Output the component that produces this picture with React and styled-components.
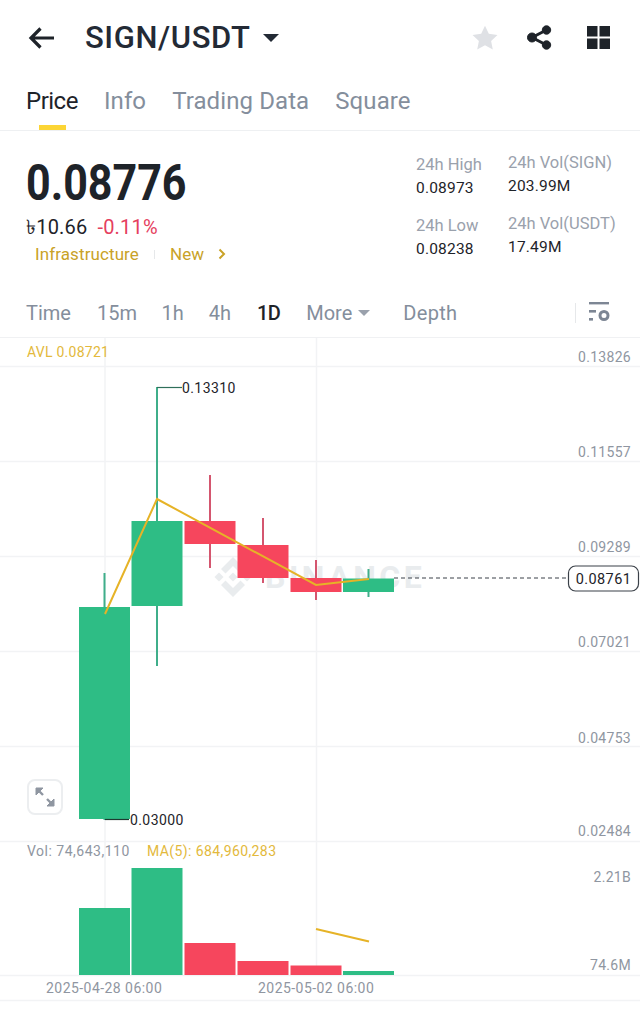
import React from "react";
import styled, { createGlobalStyle } from "styled-components";

const GlobalStyle = createGlobalStyle`
  html, body {
    margin: 0;
    padding: 0;
    background: #fff;
    font-family: Roboto, "Noto Sans", "DejaVu Sans", sans-serif;
  }
`;

const Page = styled.div`
  width: 640px;
  height: 1014px;
  overflow: hidden;
  background: #fff;
  color: #1e2329;
`;

const Header = styled.header`
  height: 75px;
  display: flex;
  align-items: center;
  padding: 0 30px 0 28px;
  box-sizing: border-box;
`;

const Symbol = styled.h1`
  margin: 0 0 0 30px;
  font-size: 31px;
  font-weight: 500;
  letter-spacing: 0.6px;
  color: #232a35;
`;

const Caret = styled.span`
  width: 0;
  height: 0;
  margin-left: ${(props) => props.gap}px;
  border-left: ${(props) => props.size}px solid transparent;
  border-right: ${(props) => props.size}px solid transparent;
  border-top: ${(props) => props.size}px solid ${(props) => props.color};
`;

const HeaderActions = styled.div`
  margin-left: auto;
  display: flex;
  align-items: center;
  gap: 29px;
`;

const GridIcon = styled.svg`
  margin-left: 6px;
`;

const Tabs = styled.nav`
  height: 55px;
  display: flex;
  gap: 26px;
  padding: 0 26px;
  border-bottom: 1px solid #eef0f2;
`;

const Tab = styled.div`
  position: relative;
  font-size: 24px;
  line-height: 52px;
  letter-spacing: ${(props) => (props.active ? "-0.5px" : "0.1px")};
  color: ${(props) => (props.active ? "#1e2329" : "#848e9c")};

  ${(props) =>
    props.active &&
    `&::after {
      content: "";
      position: absolute;
      left: 13px;
      right: 12px;
      bottom: 0;
      height: 5px;
      background: #fcd535;
    }`}
`;

const Summary = styled.section`
  height: 157px;
  display: flex;
  justify-content: space-between;
  padding: 0 0 0 26px;
`;

const PriceBlock = styled.div`
  padding-top: 23px;
`;

const LastPrice = styled.div`
  font-size: 50px;
  line-height: 58px;
  font-weight: 700;
  color: #1e2329;
  transform: scaleX(0.86);
  transform-origin: left center;
`;

const FiatRow = styled.div`
  margin-top: 3px;
  display: flex;
  gap: 10px;
  font-size: 20px;
  line-height: 24px;
  letter-spacing: 0.2px;
`;

const Change = styled.span`
  color: #e5405e;
`;

const TagRow = styled.div`
  margin: 2px 0 0 9px;
  display: flex;
  align-items: center;
  font-size: 17px;
  letter-spacing: 0.1px;
  line-height: 26px;
  color: #c9a227;
`;

const TagDivider = styled.span`
  width: 1px;
  height: 9px;
  margin: 0 15px;
  background: #e6e8ea;
`;

const TagChevron = styled.svg`
  margin-left: 14px;
`;

const Stats = styled.div`
  width: 224px;
  display: grid;
  grid-template-columns: 92px 132px;
  padding-top: 22px;
  align-content: start;
`;

const StatColumn = styled.div`
  margin-top: ${(props) => props.lift || 0}px;
  display: flex;
  flex-direction: column;
  gap: 16px;
`;

const Stat = styled.div`
  display: flex;
  flex-direction: column;
  gap: 2px;
`;

const StatLabel = styled.span`
  font-size: 16.5px;
  line-height: 23px;
  color: #9aa1ac;
  white-space: nowrap;
`;

const StatValue = styled.span`
  font-size: 15.5px;
  line-height: 20px;
  letter-spacing: 0.2px;
  color: #1e2329;
`;

const Intervals = styled.div`
  height: 50px;
  display: flex;
  align-items: center;
  padding: 0 30px 0 26px;
  box-sizing: border-box;
  border-bottom: 1px solid #f0f1f3;
`;

const Interval = styled.span`
  margin-right: ${(props) => props.gap || 0}px;
  margin-left: ${(props) => props.lead || 0}px;
  font-size: 20px;
  letter-spacing: ${(props) => props.spread || 0}px;
  font-weight: ${(props) => (props.active ? 500 : 400)};
  color: ${(props) => (props.active ? "#1e2329" : "#848e9c")};
`;

const ToolDivider = styled.span`
  width: 1px;
  height: 20px;
  margin-left: auto;
  margin-right: 13px;
  background: #e6e8ea;
`;

const ChartFrame = styled.div`
  position: relative;
  width: 640px;
  height: 676px;
`;

const ChartSvg = styled.svg`
  display: block;
  font-family: Roboto, "Noto Sans", sans-serif;
`;

const ExpandButton = styled.div`
  position: absolute;
  left: 27px;
  top: 441px;
  width: 36px;
  height: 36px;
  box-sizing: border-box;
  border: 2px solid #eceef0;
  border-radius: 8px;
  background: #fff;
  display: flex;
  align-items: center;
  justify-content: center;
`;

const GREEN = "#2ebd85";
const GREEN_WICK = "#3fae8a";
const RED = "#f6465d";
const RED_WICK = "#d4566f";
const GRID = "#f2f3f5";
const AXIS = "#8f96a1";
const GOLD = "#e3b93c";

const hLines = [366, 461, 556, 651, 746, 841, 975, 1000];
const vLines = [104.5, 316];

const axisLabels = [
  ["0.13826", 357],
  ["0.11557", 452],
  ["0.09289", 547],
  ["0.07021", 642],
  ["0.04753", 738],
  ["0.02484", 831],
  ["2.21B", 877],
  ["74.6M", 965],
];

const candles = [
  { x: 79, w: 51, top: 607, bottom: 819, high: 573, low: 820, color: GREEN, wick: GREEN_WICK, volTop: 908 },
  { x: 131.5, w: 51, top: 521, bottom: 606, high: 387, low: 666, color: GREEN, wick: GREEN_WICK, volTop: 868 },
  { x: 184.5, w: 51, top: 521, bottom: 544, high: 475, low: 568, color: RED, wick: RED_WICK, volTop: 943 },
  { x: 237.5, w: 51, top: 545, bottom: 578, high: 518, low: 583, color: RED, wick: RED_WICK, volTop: 961 },
  { x: 290.5, w: 51, top: 578, bottom: 592, high: 560, low: 600, color: RED, wick: RED_WICK, volTop: 965.5 },
  { x: 343, w: 51, top: 578.5, bottom: 592, high: 569, low: 597, color: GREEN, wick: GREEN_WICK, volTop: 971 },
];

const Candle = ({ x, w, top, bottom, high, low, color, wick, volTop }) => (
  <g fill={color}>
    <rect x={x + w / 2 - 1} y={high} width="2" height={low - high} fill={wick} />
    <rect x={x} y={top} width={w} height={bottom - top} />
    <rect x={x} y={volTop} width={w} height={975 - volTop} />
  </g>
);

const Chart = () => (
  <ChartSvg width="640" height="676" viewBox="0 338 640 676">
    {hLines.map((y) => (
      <line key={y} x1="0" x2="640" y1={y + 0.5} y2={y + 0.5} stroke={GRID} strokeWidth="1.5" />
    ))}
    {vLines.map((x) => (
      <line key={x} x1={x + 0.5} x2={x + 0.5} y1="338" y2="975" stroke={GRID} strokeWidth="1.5" />
    ))}

    {/* watermark */}
    <g fill="#e9ecee">
      <path d="M233 557l12 12-4.5 4.5-7.5-7.5-7.5 7.5-4.5-4.5z" />
      <path d="M233 597l12-12-4.5-4.5-7.5 7.5-7.5-7.5-4.5 4.5z" />
      <path d="M233 572.5l4.5 4.5-4.5 4.5-4.5-4.5zM219 572.5l4.5 4.5-4.5 4.5-4.5-4.5zM247 572.5l4.5 4.5-4.5 4.5-4.5-4.5z" />
      <text x="265" y="588" fontSize="32" fontWeight="700" letterSpacing="3.5">BINANCE</text>
    </g>

    {candles.map((c) => (
      <Candle key={c.x} {...c} />
    ))}

    <polyline points="105,614 157,499 316,585 369,579" fill="none" stroke="#e6b327" strokeWidth="2" />
    <line x1="316" y1="929" x2="369" y2="941.5" stroke="#e6b327" strokeWidth="2" />

    <path d="M157 387.5H182" stroke="#2f6f5a" strokeWidth="1.2" fill="none" />
    <text x="182" y="393" fontSize="14" letterSpacing="0.4" fill="#1e2329">0.13310</text>
    <path d="M105 819.5H129" stroke="#1e3a30" strokeWidth="1.2" fill="none" />
    <text x="130" y="825" fontSize="14" letterSpacing="0.4" fill="#1e2329">0.03000</text>

    <line x1="394" x2="567" y1="578" y2="578" stroke="#3a4048" strokeWidth="1" strokeDasharray="4 3" />
    <rect x="568.5" y="566" width="70" height="25" rx="7" fill="#fff" stroke="#3a4048" strokeWidth="1.2" />
    <text x="603.5" y="584" fontSize="14.5" letterSpacing="0.4" textAnchor="middle" fill="#1e2329">0.08761</text>

    {axisLabels.map(([label, y]) => (
      <text key={label} x="631" y={y + 5} fontSize="14" letterSpacing="0.3" textAnchor="end" fill={AXIS}>
        {label}
      </text>
    ))}

    <text x="27" y="357" fontSize="14" letterSpacing="0.25" fill={GOLD}>AVL 0.08721</text>
    <text x="27" y="856" fontSize="14" letterSpacing="0.5" fill={AXIS}>Vol: 74,643,110</text>
    <text x="147" y="856" fontSize="14" letterSpacing="0.4" fill={GOLD}>MA(5): 684,960,283</text>
    <text x="46" y="993" fontSize="14" letterSpacing="0.45" fill={AXIS}>2025-04-28 06:00</text>
    <text x="258" y="993" fontSize="14" letterSpacing="0.45" fill={AXIS}>2025-05-02 06:00</text>
  </ChartSvg>
);

const stats = [
  {
    lift: 0,
    items: [
      ["24h High", "0.08973"],
      ["24h Low", "0.08238"],
    ],
  },
  {
    lift: -2,
    items: [
      ["24h Vol(SIGN)", "203.99M"],
      ["24h Vol(USDT)", "17.49M"],
    ],
  },
];

const intervals = [
  ["Time", 26],
  ["15m", 24.5],
  ["1h", 25],
  ["4h", 26],
  ["1D", 26],
];

const App = () => (
  <Page>
    <GlobalStyle />
    <Header>
      <svg width="27" height="24" viewBox="0 0 27 24" fill="none" stroke="#1e2329" strokeWidth="3.2">
        <path d="M26 12H3M12.5 2.5L3 12l9.5 9.5" />
      </svg>
      <Symbol>SIGN/USDT</Symbol>
      <Caret size={8} gap={12} color="#232a35" />
      <HeaderActions>
        <svg width="26" height="26" viewBox="0 0 26 26" fill="#dfe1e5">
          <path d="M13 .8l3.8 8 8.7 1.1-6.4 6 1.7 8.7L13 20.3l-7.8 4.3 1.7-8.7-6.4-6 8.7-1.1z" />
        </svg>
        <svg width="25" height="25" viewBox="0 0 25 25" fill="#1e2329" stroke="#1e2329">
          <circle cx="19.5" cy="5" r="4.2" />
          <circle cx="19.5" cy="20" r="4.2" />
          <circle cx="5" cy="12.5" r="4.5" />
          <path d="M19.5 5L5 12.5 19.5 20" fill="none" strokeWidth="3" />
        </svg>
        <GridIcon width="23" height="23" viewBox="0 0 23 23" fill="#1e2329">
          <rect width="10.5" height="10.5" />
          <rect x="12.5" width="10.5" height="10.5" />
          <rect y="12.5" width="10.5" height="10.5" />
          <rect x="12.5" y="12.5" width="10.5" height="10.5" />
        </GridIcon>
      </HeaderActions>
    </Header>

    <Tabs>
      <Tab active>Price</Tab>
      <Tab>Info</Tab>
      <Tab>Trading Data</Tab>
      <Tab>Square</Tab>
    </Tabs>

    <Summary>
      <PriceBlock>
        <LastPrice>0.08776</LastPrice>
        <FiatRow>
          <span>৳10.66</span>
          <Change>-0.11%</Change>
        </FiatRow>
        <TagRow>
          Infrastructure
          <TagDivider />
          New
          <TagChevron width="8" height="12" viewBox="0 0 8 12" fill="none" stroke="#c9a227" strokeWidth="2">
            <path d="M1.5 1.5L6 6l-4.5 4.5" />
          </TagChevron>
        </TagRow>
      </PriceBlock>
      <Stats>
        {stats.map((column) => (
          <StatColumn key={column.items[0][0]} lift={column.lift}>
            {column.items.map(([label, value]) => (
              <Stat key={label}>
                <StatLabel>{label}</StatLabel>
                <StatValue>{value}</StatValue>
              </Stat>
            ))}
          </StatColumn>
        ))}
      </Stats>
    </Summary>

    <Intervals>
      {intervals.map(([label, gap]) => (
        <Interval key={label} gap={gap} active={label === "1D"} spread={label === "1D" ? -0.6 : 0}>
          {label}
        </Interval>
      ))}
      <Interval>More</Interval>
      <Caret size={6} gap={6} color="#9aa1ac" />
      <Interval lead={33} spread={0.3}>Depth</Interval>
      <ToolDivider />
      <svg width="21" height="23" viewBox="0 0 21 23" fill="#7d8694">
        <rect y="1" width="20" height="2.4" />
        <rect y="9" width="7" height="2.6" />
        <rect y="17" width="4" height="2.6" />
        <circle cx="15" cy="14.5" r="4" fill="none" stroke="#7d8694" strokeWidth="3" />
      </svg>
    </Intervals>

    <ChartFrame>
      <Chart />
      <ExpandButton>
        <svg width="24" height="24" viewBox="0 0 24 24" fill="#8f96a1" stroke="#8f96a1" strokeWidth="2.4">
          <path d="M3 3h7l-7 7zM21 21h-7l7-7z" strokeWidth="1" />
          <path d="M6 6l4 4M18 18l-4-4" fill="none" />
        </svg>
      </ExpandButton>
    </ChartFrame>
  </Page>
);

export default App;
